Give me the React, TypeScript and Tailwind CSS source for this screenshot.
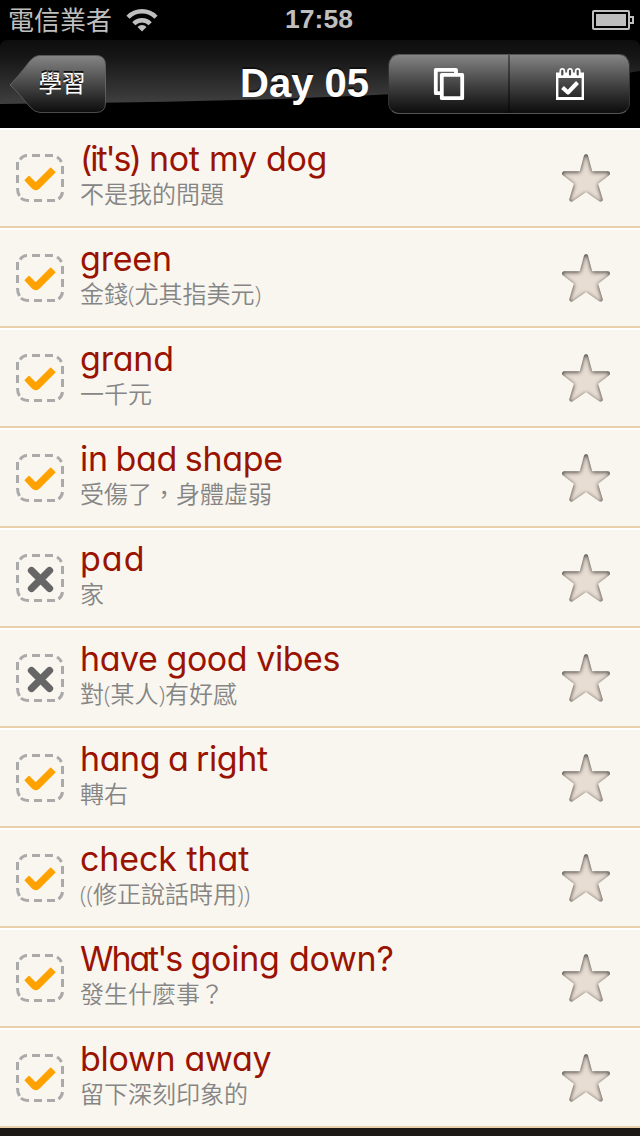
import { clsx } from 'clsx';

interface Word {
  lead?: string;
  term: string;
  meaning: string;
  known: boolean;
  tracking: string;
}

const words: Word[] = [
  { lead: "(it's)", term: ' not my dog', meaning: '不是我的問題', known: true, tracking: 'tracking-[-0.3px]' },
  { term: 'green', meaning: '金錢(尤其指美元)', known: true, tracking: 'tracking-[-0.2px]' },
  { term: 'grand', meaning: '一千元', known: true, tracking: 'tracking-[-0.2px]' },
  { term: 'in bad shape', meaning: '受傷了，身體虛弱', known: true, tracking: 'tracking-[-0.3px] [word-spacing:-1.5px]' },
  { term: 'pad', meaning: '家', known: false, tracking: 'tracking-[1px]' },
  { term: 'have good vibes', meaning: '對(某人)有好感', known: false, tracking: 'tracking-[-0.45px]' },
  { term: 'hang a right', meaning: '轉右', known: true, tracking: 'tracking-[-0.4px] [word-spacing:-1.5px]' },
  { term: 'check that', meaning: '((修正說話時用))', known: true, tracking: 'tracking-[-0.1px]' },
  { lead: "What's", term: ' going down?', meaning: '發生什麼事？', known: true, tracking: 'tracking-[-0.25px]' },
  { term: 'blown away', meaning: '留下深刻印象的', known: true, tracking: 'tracking-[-0.3px]' },
];

function StatusBar() {
  return (
    <div className="grid h-10 grid-cols-[1fr_auto_1fr] items-center bg-black pr-[6px] pl-2 text-[#bfbfbf]">
      <div className="flex items-center gap-[15px]">
        <span className="-mt-[3px] text-[26px] leading-10 font-normal">電信業者</span>
        <svg className="-ml-[1px]" width="32" height="24" viewBox="0 0 32 24" fill="none" stroke="currentColor" strokeWidth="4.4">
          <path d="M2 9.2a19.5 19.5 0 0 1 28 0" />
          <path d="M7.8 15.7a11.5 11.5 0 0 1 16.4 0" />
          <path d="M16 23.5l-4.5-4.6a6.5 6.5 0 0 1 9 0z" fill="currentColor" stroke="none" />
        </svg>
      </div>
      <span className="-ml-[4px] font-['Liberation_Sans',sans-serif] text-[26.5px] font-bold">17:58</span>
      <svg className="justify-self-end" width="42" height="20" viewBox="0 0 42 20" fill="currentColor">
        <rect x="1" y="1" width="36" height="18" rx="1" fill="none" stroke="currentColor" strokeWidth="2" />
        <rect x="4" y="4" width="30" height="12" />
        <path d="M38 6h4v8h-4v-2h2V8h-2z" />
      </svg>
    </div>
  );
}

function BackButton() {
  return (
    <button className="relative h-[60px] w-[98px] pb-1 pl-2 text-[23.5px] leading-[50px] font-normal text-white [text-shadow:0_-2px_0_#111]">
      <svg className="absolute inset-0" width="98" height="60" viewBox="0 0 98 60">
        <defs>
          <linearGradient id="back" x1="0" y1="0" x2="0" y2="1">
            <stop offset="0" stopColor="#858585" />
            <stop offset="0.5" stopColor="#484848" />
            <stop offset="1" stopColor="#0c0c0c" />
          </linearGradient>
          <linearGradient id="back-edge" x1="0" y1="0" x2="0" y2="1">
            <stop offset="0" stopColor="#555" />
            <stop offset="0.5" stopColor="#666" />
            <stop offset="1" stopColor="#4a4a4a" />
          </linearGradient>
        </defs>
        <path
          d="M1 31C8 24 17 12 20 8Q25 1.5 31 1.5H87Q96.5 1.5 96.5 11V49Q96.5 58.5 87 58.5H31Q26 58.5 21 53C15 46 8 37 1 31Z"
          fill="url(#back)"
          stroke="url(#back-edge)"
          strokeWidth="1"
        />
      </svg>
      <span className="relative">學習</span>
    </button>
  );
}

function CopyIcon() {
  return (
    <svg width="32" height="34" viewBox="0 0 32 34" fill="none" stroke="white" strokeWidth="3.8" strokeLinejoin="round">
      <path d="M7 26.2H2.8V2.8H23V7" />
      <rect x="8.8" y="7.8" width="20.4" height="23.4" />
    </svg>
  );
}

function CalendarIcon() {
  return (
    <svg width="28" height="34" viewBox="0 0 28 34" fill="none" stroke="white">
      <path d="M1.2 10V31.5H26.8V10" strokeWidth="2.4" />
      <path d="M0 31.5H28" strokeWidth="3" />
      <path d="M0 5.5H28V11H0Z" fill="white" stroke="none" />
      <g fill="#4a4a4a" strokeWidth="1.8">
        <rect x="4.3" y="1.9" width="4" height="7.5" rx="2" />
        <rect x="12" y="1.9" width="4" height="7.5" rx="2" />
        <rect x="19.7" y="1.9" width="4" height="7.5" rx="2" />
      </g>
      <path d="M6.5 20.5L12 25.5L21.5 15.5" strokeWidth="4" strokeLinejoin="round" />
    </svg>
  );
}

function NavBar() {
  return (
    <header className="relative flex h-[88px] items-start overflow-hidden bg-black pt-[14px] pr-[10px] pl-[9px]">
      <svg className="absolute inset-0" width="640" height="88" viewBox="0 0 640 88">
        <defs>
          <linearGradient id="gloss" x1="0" y1="0" x2="0" y2="64" gradientUnits="userSpaceOnUse">
            <stop offset="0" stopColor="#0d0d0d" />
            <stop offset="0.25" stopColor="#151515" />
            <stop offset="1" stopColor="#404040" />
          </linearGradient>
        </defs>
        <path d="M0 8Q0 0 8 0H632Q640 0 640 8V31Q460 61 0 64Z" fill="url(#gloss)" />
      </svg>
      <BackButton />
      <h1 className="relative ml-[133px] font-['Liberation_Sans',sans-serif] text-[40px] leading-[58px] font-bold whitespace-nowrap text-white [text-shadow:0_-2px_0_#111]">
        Day 05
      </h1>
      <div className="relative ml-auto flex h-[60px] w-[242px] overflow-hidden rounded-[11px] border border-t-[#555] border-r-[#333] border-b-[#555] border-l-[#333] bg-linear-to-b from-[#858585] to-[#0d0d0d]">
        <button className="flex w-[121px] items-center justify-center border-r-2 border-black/40">
          <CopyIcon />
        </button>
        <button className="flex flex-1 items-center justify-center">
          <CalendarIcon />
        </button>
      </div>
    </header>
  );
}

function StatusBox({ known }: { known: boolean }) {
  return (
    <svg className="shrink-0" width="48" height="48" viewBox="0 0 48 48" fill="none">
      <g stroke="#aaa" strokeWidth="3">
        <path d="M16 1.5h8M29 1.5h8M18 46.5h8M31 46.5h8" />
        <path d="M1.5 8v8M1.5 21v8M46.5 12v8M46.5 25v8" />
        <path d="M4 5.5q3-4 7-4M41 3q3 1.8 4.5 5M1.500 34q0 5 2 8M5 44q2.500 2.500 8 2.500M46.500 38q-.5 4.500-4 7" />
      </g>
      {known ? (
        <path
          d="M9.3 26.2L13 22.5L19.7 29.2L34.7 14.3L38.8 18.2L22.3 34.7Q19.5 36.3 17 34.5Z"
          fill="#ffa200"
          stroke="#ffa200"
          strokeWidth="1.5"
          strokeLinejoin="round"
        />
      ) : (
        <path d="M15.5 16.5L33.5 34.5M33.5 16.5L15.5 34.5" stroke="#666" strokeWidth="7.3" strokeLinecap="round" />
      )}
    </svg>
  );
}

function Star() {
  return (
    <svg className="shrink-0" width="52" height="52" viewBox="-2 -2 52 52">
      <path
        d="M24 2.5L28.5 19.5H45.8L33.5 29L38.5 45.5L24 35.5L9.5 45.5L14.5 29L2.2 19.5H19.5Z"
        fill="#e8ddd2"
        stroke="#e8ddd2"
        strokeWidth="4.4"
        strokeLinejoin="round"
        filter="url(#carved)"
      />
    </svg>
  );
}

function WordRow({ word }: { word: Word }) {
  return (
    <li className="flex h-[100px] items-start border-t-2 border-b-2 border-t-white border-b-[#e9cfaa] bg-[#f9f6ef] pr-[28px] pl-4">
      <div className="pt-6">
        <StatusBox known={word.known} />
      </div>
      <div className="flex-1 pt-[9px] pl-4">
        <h2
          className={clsx(
            "font-['Inter',sans-serif] text-[34px] leading-10 font-normal whitespace-nowrap text-[#991300] [font-feature-settings:'cv11']",
            word.tracking
          )}
        >
          {word.lead && <span className="tracking-[-2.1px]">{word.lead}</span>}
          {word.term}
        </h2>
        <p className="-mt-[1px] font-['Open_Sans','Noto_Sans_CJK_TC',sans-serif] text-2xl leading-8 font-[350] whitespace-nowrap text-[#858585]">
          {word.meaning}
        </p>
      </div>
      <div className="pt-[22px]">
        <Star />
      </div>
    </li>
  );
}

export default function App() {
  return (
    <div className="h-[1136px] w-[640px] overflow-hidden bg-[#1b1815] font-['Noto_Sans_CJK_TC',sans-serif]">
      {/* shared inner shadow for the stars */}
      <svg className="absolute" width="0" height="0">
        <filter id="carved" x="-40%" y="-40%" width="180%" height="180%" colorInterpolationFilters="sRGB">
          <feFlood floodColor="#3a3634" />
          <feComposite in2="SourceAlpha" operator="out" />
          <feGaussianBlur stdDeviation="2" />
          <feOffset dy="1" />
          <feComposite in2="SourceAlpha" operator="in" result="shade" />
          <feMerge>
            <feMergeNode in="SourceGraphic" />
            <feMergeNode in="shade" />
          </feMerge>
        </filter>
      </svg>
      <StatusBar />
      <NavBar />
      <ul>
        {words.map((word) => (
          <WordRow key={word.term} word={word} />
        ))}
      </ul>
    </div>
  );
}
